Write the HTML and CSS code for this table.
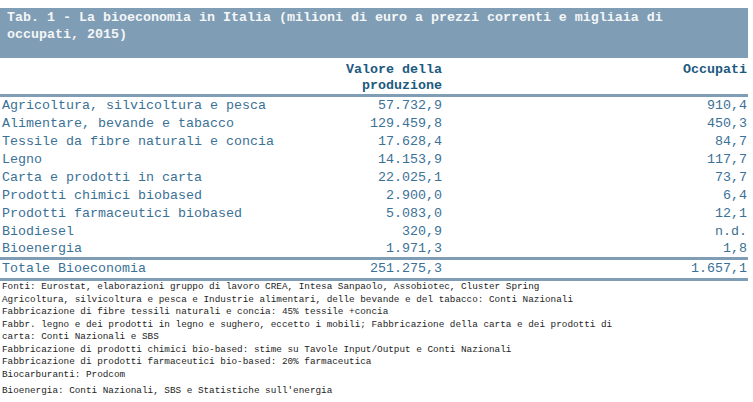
FILE: index.html
```html
<!DOCTYPE html>
<html lang="it">
<head>
<meta charset="utf-8">
<title>Tab. 1 - La bioeconomia in Italia</title>
<link rel="stylesheet" href="styles.css">
</head>
<body>
<div class="page">
  <table class="bio">
    <colgroup>
      <col class="c-name">
      <col class="c-val">
      <col class="c-occ">
    </colgroup>
    <thead>
      <tr class="title-row">
        <th colspan="3" class="title">Tab. 1 - La bioeconomia in Italia (milioni di euro a prezzi correnti e migliaia di occupati, 2015)</th>
      </tr>
      <tr class="head-row">
        <th></th>
        <th class="num">Valore della produzione</th>
        <th class="num">Occupati</th>
      </tr>
    </thead>
    <tbody>
      <tr><td>Agricoltura, silvicoltura e pesca</td><td class="num">57.732,9</td><td class="num">910,4</td></tr>
      <tr><td>Alimentare, bevande e tabacco</td><td class="num">129.459,8</td><td class="num">450,3</td></tr>
      <tr><td>Tessile da fibre naturali e concia</td><td class="num">17.628,4</td><td class="num">84,7</td></tr>
      <tr><td>Legno</td><td class="num">14.153,9</td><td class="num">117,7</td></tr>
      <tr><td>Carta e prodotti in carta</td><td class="num">22.025,1</td><td class="num">73,7</td></tr>
      <tr><td>Prodotti chimici biobased</td><td class="num">2.900,0</td><td class="num">6,4</td></tr>
      <tr><td>Prodotti farmaceutici biobased</td><td class="num">5.083,0</td><td class="num">12,1</td></tr>
      <tr><td>Biodiesel</td><td class="num">320,9</td><td class="num">n.d.</td></tr>
      <tr class="last"><td>Bioenergia</td><td class="num">1.971,3</td><td class="num">1,8</td></tr>
    </tbody>
    <tfoot>
      <tr class="total"><td>Totale Bioeconomia</td><td class="num">251.275,3</td><td class="num">1.657,1</td></tr>
    </tfoot>
  </table>
  <div class="notes">
    <p>Fonti: Eurostat, elaborazioni gruppo di lavoro CREA, Intesa Sanpaolo, Assobiotec, Cluster Spring<br>
    Agricoltura, silvicoltura e pesca e Industrie alimentari, delle bevande e del tabacco: Conti Nazionali<br>
    Fabbricazione di fibre tessili naturali e concia: 45% tessile +concia<br>
    Fabbr. legno e dei prodotti in legno e sughero, eccetto i mobili; Fabbricazione della carta e dei prodotti di<br>
    carta: Conti Nazionali e SBS<br>
    Fabbricazione di prodotti chimici bio-based: stime su Tavole Input/Output e Conti Nazionali<br>
    Fabbricazione di prodotti farmaceutici bio-based: 20% farmaceutica<br>
    Biocarburanti: Prodcom</p>
    <p class="gap">Bioenergia: Conti Nazionali, SBS e Statistiche sull'energia</p>
  </div>
</div>
</body>
</html>
```
FILE: styles.css
```css
html, body {
  margin: 0;
  padding: 0;
  background: #ffffff;
}

.page {
  width: 748px;
  padding-top: 8px;
  font-family: "Liberation Mono", "Courier New", monospace;
}

.bio {
  width: 748px;
  border-collapse: collapse;
  table-layout: fixed;
  font-size: 13.33px;
  color: #3a7196;
}

.c-name { width: 340px; }
.c-val { width: 103px; }
.c-occ { width: 305px; }

.bio th,
.bio td {
  padding: 0 1px 0 2px;
  text-align: left;
  vertical-align: top;
  font-weight: normal;
}

.bio .num {
  text-align: right;
}

.title-row {
  background: #7f9db4;
}

.bio th.title {
  color: #f4f6f8;
  font-weight: bold;
  line-height: 17px;
  padding: 1px 6px 15px 7px;
  height: 34px;
}

.head-row th {
  font-weight: bold;
  color: #1d5a7f;
  line-height: 16px;
  padding-top: 4px;
  padding-bottom: 0;
  height: 32px;
  border-bottom: 3px solid #7f9db4;
}

.bio tbody td {
  line-height: 18px;
  height: 18px;
}

.bio tr.last td {
  border-bottom: 3px solid #7f9db4;
  line-height: 16px;
  height: 16px;
}

.bio tr.total td {
  line-height: 18px;
  height: 18px;
  border-bottom: 3px solid #7f9db4;
}

.notes {
  font-size: 9.33px;
  line-height: 12.5px;
  color: #1e1e1e;
  padding-left: 2px;
}

.notes p {
  margin: 0;
}

.notes p.gap {
  margin-top: 4px;
}
```
